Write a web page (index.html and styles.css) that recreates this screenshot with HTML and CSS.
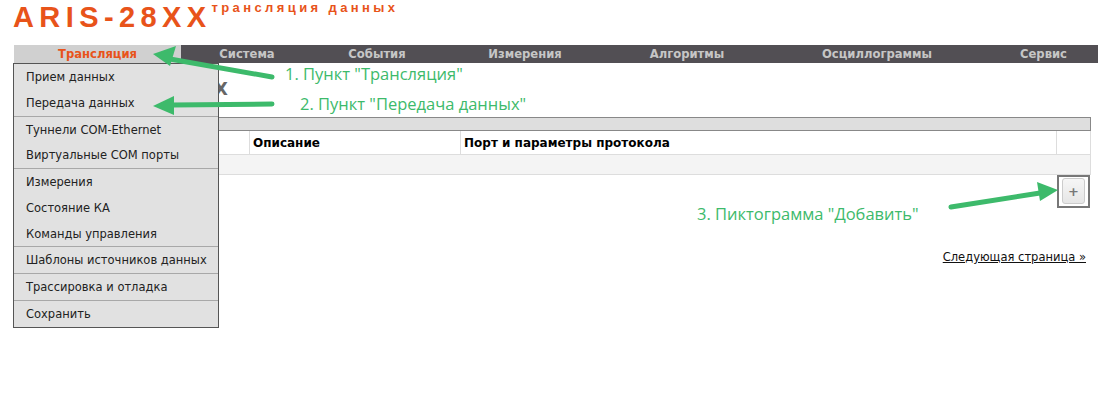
FILE: index.html
```html
<!DOCTYPE html>
<html lang="ru">

<head>
    <meta charset="UTF-8">
    <title>ARIS-28XX трансляция данных</title>
    <link rel="stylesheet" href="styles.css">
</head>

<body>
    <div class="page">
        <div class="logo">
            <span class="logo-name">ARIS-28XX</span>
            <span class="logo-sub">трансляция данных</span>
        </div>

        <div class="nav">
            <div class="nav-item active">Трансляция</div>
            <div class="nav-item">Система</div>
            <div class="nav-item">События</div>
            <div class="nav-item">Измерения</div>
            <div class="nav-item">Алгоритмы</div>
            <div class="nav-item">Осциллограммы</div>
            <div class="nav-item">Сервис</div>

            <ul class="dropdown">
                <li>Прием данных</li>
                <li class="sep">Передача данных</li>
                <li>Туннели COM-Ethernet</li>
                <li class="sep">Виртуальные COM порты</li>
                <li>Измерения</li>
                <li>Состояние КА</li>
                <li class="sep">Команды управления</li>
                <li class="sep">Шаблоны источников данных</li>
                <li class="sep">Трассировка и отладка</li>
                <li>Сохранить</li>
            </ul>
        </div>

        <h2 class="title">Передача ARIS-28XX</h2>

        <table class="grid">
            <tr class="grid-bar">
                <td colspan="4"></td>
            </tr>
            <tr class="grid-head">
                <th class="col-name">Имя</th>
                <th class="col-desc">Описание</th>
                <th class="col-port">Порт и параметры протокола</th>
                <th class="col-act"></th>
            </tr>
            <tr class="grid-empty">
                <td colspan="4"></td>
            </tr>
        </table>

        <div class="actions">
            <div class="mark">
                <button class="btn-add">+</button>
            </div>
        </div>

        <div class="pager">
            <a href="#">Следующая страница »</a>
        </div>
    </div>

    <!-- пометки поверх скриншота -->
    <svg class="arrows" width="1101" height="402" viewBox="0 0 1101 402">
        <g fill="#3dba6b" stroke="#3dba6b" stroke-linecap="round">
            <line x1="272" y1="77" x2="170" y2="59" stroke-width="5"/>
            <polygon points="153,54 176,46 170,66" stroke="none"/>
            <line x1="272" y1="104" x2="172" y2="105" stroke-width="5"/>
            <polygon points="153,106 174,96 174,115" stroke="none"/>
            <line x1="951" y1="207" x2="1040" y2="193" stroke-width="5"/>
            <polygon points="1058,190 1037,182 1040,201" stroke="none"/>
        </g>
    </svg>
    <div class="note note-1">1. Пункт "Трансляция"</div>
    <div class="note note-2">2. Пункт "Передача данных"</div>
    <div class="note note-3">3. Пиктограмма "Добавить"</div>
</body>

</html>
```

FILE: styles.css
```css
body {
    margin: 0;
    font-family: "DejaVu Sans", Verdana, sans-serif;
    font-size: 12px;
    color: #111;
    background: #fff;
}

.page {
    width: 1077px;
    min-height: 402px;
    padding: 0 10px 0 14px;
}

/* шапка */
.logo {
    height: 45px;
    display: flex;
    align-items: flex-start;
    margin-left: -1px;
}

.logo-name {
    font-family: "Liberation Sans", Arial, sans-serif;
    font-weight: bold;
    font-size: 29px;
    letter-spacing: 5.4px;
    color: #e8531a;
    line-height: 32px;
    margin-top: 1px;
}

.logo-sub {
    font-family: "Liberation Sans", Arial, sans-serif;
    font-weight: bold;
    font-size: 13px;
    letter-spacing: 3.4px;
    color: #e8531a;
    line-height: 14px;
    margin-top: 1px;
}

/* меню */
.nav {
    position: relative;
    display: grid;
    grid-template-columns: 167px 132px 128px 168px 156px 224px 1fr;
    height: 18px;
    margin-right: -7px;
    background: #524f54;
}

.nav-item {
    text-align: center;
    font-weight: bold;
    font-size: 11.6px;
    line-height: 18px;
    color: #c6c6c6;
    white-space: nowrap;
}

.nav-item.active {
    background: #d0d0d0;
    color: #e8531a;
}

.dropdown {
    position: absolute;
    top: 18px;
    left: -1px;
    z-index: 5;
    width: 204px;
    margin: 0;
    padding: 0;
    list-style: none;
    background: #e1e1e1;
    border: 1px solid #555;
}

.dropdown li {
    height: 25.75px;
    line-height: 26px;
    padding-left: 12px;
    font-size: 11.5px;
    color: #222;
    white-space: nowrap;
}

.dropdown li.sep {
    border-bottom: 1px solid #a8a8a8;
}

/* содержимое */
.title {
    margin: 12px 0 0;
    height: 42px;
    font-size: 17.7px;
    line-height: 28px;
    color: #666;
    white-space: nowrap;
}

.grid {
    width: 1077px;
    border-collapse: collapse;
}

.grid-bar td {
    height: 12px;
    padding: 0;
    background: #dedede;
    border: 1px solid #888;
}

.grid-head th {
    height: 23px;
    padding: 0 3px;
    text-align: left;
    font-size: 12px;
    font-weight: bold;
    color: #000;
    background: #fff;
    border: 1px solid #ddd;
}

.col-name {
    width: 228px;
}

.col-desc {
    width: 204px;
}

.col-act {
    width: 27px;
}

.grid-empty td {
    height: 19px;
    padding: 0;
    background: #f4f4f4;
    border: 1px solid #ddd;
}

.actions {
    display: flex;
    justify-content: flex-end;
    padding-right: 1px;
}

.mark {
    border: 2px solid #777;
    padding: 1px 3px 2px;
}

.btn-add {
    display: block;
    width: 23px;
    height: 26px;
    padding: 0;
    font-family: "DejaVu Sans", sans-serif;
    font-size: 13px;
    font-weight: bold;
    color: #777;
    border: 1px solid #ccc;
    border-radius: 3px;
    background: linear-gradient(#f6f6f6, #e6e6e6);
}

.pager {
    margin-top: 42px;
    text-align: right;
    padding-right: 5px;
}

.pager a {
    color: #111;
    font-size: 11.5px;
}

/* пометки */
.arrows {
    position: absolute;
    top: 0;
    left: 0;
    z-index: 10;
    pointer-events: none;
}

.note {
    position: absolute;
    z-index: 10;
    font-family: "Open Sans", "Noto Sans", sans-serif;
    font-size: 16.5px;
    line-height: 20px;
    color: #3dba6b;
    white-space: nowrap;
}

.note-1 {
    left: 285px;
    top: 64px;
}

.note-2 {
    left: 300px;
    top: 94px;
}

.note-3 {
    left: 697px;
    top: 204px;
}
```
